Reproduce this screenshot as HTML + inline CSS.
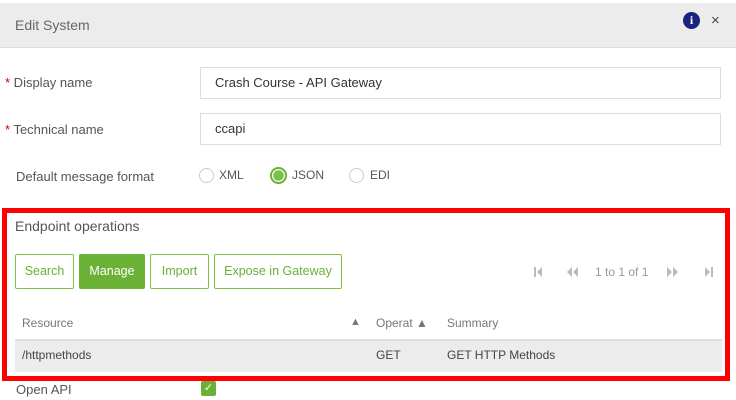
<!DOCTYPE html>
<html><head><style>
body{margin:0;width:736px;height:400px;background:#fff;font-family:"Liberation Sans",sans-serif;color:#555;position:relative;overflow:hidden}
.a{position:absolute}
.hdr{left:0;top:3px;width:736px;height:44px;background:#ececec;border-bottom:1px solid #ddd}
.lbl{font-size:13px;color:#555}
.inp{left:200px;width:521px;height:32px;border:1px solid #ddd;box-sizing:border-box;font-size:13px;color:#333;padding-left:14px;line-height:30px}
.req{color:#c00}
.radio{width:15px;height:15px;border:1px solid #ccc;border-radius:50%;box-sizing:border-box}
.btn{top:254px;height:35px;border:1px solid #7cc04a;border-radius:2px;box-sizing:border-box;color:#6ab136;font-size:12.5px;line-height:33px;text-align:center}
svg.p{position:absolute;top:266px}
</style></head><body>
<div class="a hdr"></div>
<div class="a lbl" style="left:15px;top:17px;font-size:14px;color:#666">Edit System</div>
<div class="a" style="left:683px;top:12px;width:17px;height:17px;border-radius:50%;background:#1a237e;color:#fff;font:bold 12px 'Liberation Serif',serif;text-align:center;line-height:17px">i</div>
<div class="a" style="left:711px;top:12px;font-size:15px;color:#444">×</div>

<div class="a lbl" style="left:5px;top:75px"><span class="req">*</span> Display name</div>
<div class="a inp" style="top:67px">Crash Course - API Gateway</div>
<div class="a lbl" style="left:5px;top:122px"><span class="req">*</span> Technical name</div>
<div class="a inp" style="top:113px">ccapi</div>
<div class="a lbl" style="left:16px;top:169px">Default message format</div>
<div class="a radio" style="left:199px;top:168px"></div>
<div class="a lbl" style="left:219px;top:168px;font-size:12px">XML</div>
<div class="a radio" style="left:270px;top:167px;width:17px;height:17px;border:2px solid #6ab136;background:radial-gradient(#7cc04a 55%,#fff 60%)"></div>
<div class="a lbl" style="left:292px;top:168px;font-size:12px">JSON</div>
<div class="a radio" style="left:349px;top:168px"></div>
<div class="a lbl" style="left:370px;top:168px;font-size:12px">EDI</div>

<div class="a" style="left:2px;top:208px;width:728px;height:173px;border:5px solid #f00;box-sizing:border-box"></div>
<div class="a lbl" style="left:15px;top:218px;font-size:14px">Endpoint operations</div>
<div class="a btn" style="left:15px;width:59px">Search</div>
<div class="a btn" style="left:79px;width:66px;background:#6ab136;color:#fff;border-color:#6ab136">Manage</div>
<div class="a btn" style="left:150px;width:59px">Import</div>
<div class="a btn" style="left:214px;width:128px">Expose in Gateway</div>
<svg class="p" style="left:534px" width="9" height="12"><rect x="0" y="1" width="2" height="10" fill="#bbb"/><path d="M8 1L3 6L8 11Z" fill="#bbb"/></svg>
<svg class="p" style="left:566px" width="13" height="12"><path d="M6 1L1 6L6 11ZM12 1L7 6L12 11Z" fill="#bbb"/></svg>
<div class="a" style="left:595px;top:265px;font-size:12px;color:#999">1 to 1 of 1</div>
<svg class="p" style="left:666px" width="13" height="12"><path d="M1 1L6 6L1 11ZM7 1L12 6L7 11Z" fill="#bbb"/></svg>
<svg class="p" style="left:704px" width="9" height="12"><path d="M1 1L6 6L1 11Z" fill="#bbb"/><rect x="7" y="1" width="2" height="10" fill="#bbb"/></svg>
<div class="a lbl" style="left:22px;top:316px;font-size:12px;color:#777">Resource</div>
<div class="a" style="left:350px;top:316px;font-size:11px;color:#777">▲</div>
<div class="a lbl" style="left:376px;top:316px;font-size:12px;color:#777">Operat ▲</div>
<div class="a lbl" style="left:447px;top:316px;font-size:12px;color:#777">Summary</div>
<div class="a" style="left:15px;top:339px;width:707px;height:33px;background:#ececec;border-top:2px solid #e0e0e0;box-sizing:border-box"></div>
<div class="a lbl" style="left:22px;top:348px;font-size:12px;color:#444">/httpmethods</div>
<div class="a lbl" style="left:376px;top:348px;font-size:12px;color:#444">GET</div>
<div class="a lbl" style="left:447px;top:348px;font-size:12px;color:#444">GET HTTP Methods</div>
<div class="a lbl" style="left:16px;top:382px">Open API</div>
<div class="a" style="left:201px;top:381px;width:15px;height:15px;background:#6ab136;border-radius:2px;color:#fff;font-size:11px;text-align:center;line-height:15px">✓</div>
</body></html>
